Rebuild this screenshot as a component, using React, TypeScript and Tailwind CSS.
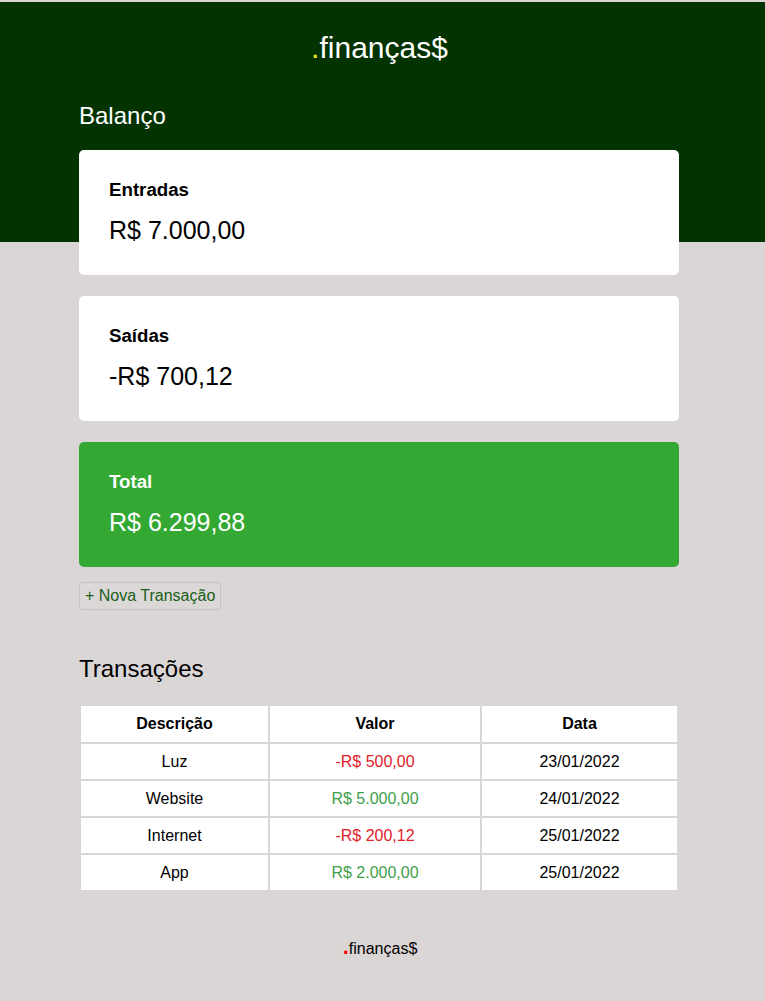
import React from 'react';

interface Transaction {
  description: string;
  amount: string;
  date: string;
  type: 'in' | 'out';
}

const transactions: Transaction[] = [
  { description: 'Luz', amount: '-R$ 500,00', date: '23/01/2022', type: 'out' },
  { description: 'Website', amount: 'R$ 5.000,00', date: '24/01/2022', type: 'in' },
  { description: 'Internet', amount: '-R$ 200,12', date: '25/01/2022', type: 'out' },
  { description: 'App', amount: 'R$ 2.000,00', date: '25/01/2022', type: 'in' },
];

const BalanceCard: React.FC<{ title: string; value: string; total?: boolean }> = ({ title, value, total }) => (
  <div
    className={`h-[125px] rounded-[5px] px-[30px] pt-[29px] ${
      total ? 'bg-[#33a833] text-white' : 'bg-white text-black'
    }`}
  >
    <h3 className="text-[18.7px] leading-[22px] font-bold">{title}</h3>
    <p className="mt-[15px] text-[25px] leading-[29px]">{value}</p>
  </div>
);

const App: React.FC = () => {
  return (
    <div className="min-h-[1001px] bg-[#dad6d6] pt-[2px] font-['Liberation_Sans',Arial,sans-serif] text-black">
      <header className="h-[240px] bg-[#033300]">
        <div className="pt-[29px] pr-[6px] text-center text-[30px] leading-[34px] text-white">
          <span className="text-[#e8ea2c]">.</span>finanças$
        </div>
        <div className="ml-[79px] mt-[37px] w-[600px] text-[24px] leading-[28px] text-white">Balanço</div>
      </header>

      <main className="ml-[79px] -mt-[92px] w-[600px]">
        <section className="flex flex-col gap-[21px]">
          <BalanceCard title="Entradas" value="R$ 7.000,00" />
          <BalanceCard title="Saídas" value="-R$ 700,12" />
          <BalanceCard title="Total" value="R$ 6.299,88" total />
        </section>

        <button className="mt-[15px] h-[28px] rounded-[3px] border border-[#c6c3c3] bg-[#dcd8d8] px-[5px] text-[16px] leading-[18px] text-[#1a5f1a]">
          + Nova Transação
        </button>

        <h2 className="mt-[45px] text-[24px] leading-[28px]">Transações</h2>

        <table className="mt-[21px] w-[600px] border-separate border-spacing-[2px] text-[16px]">
          <thead>
            <tr>
              <th className="h-[36px] w-[187px] bg-white font-bold">Descrição</th>
              <th className="h-[36px] w-[210px] bg-white font-bold">Valor</th>
              <th className="h-[36px] bg-white font-bold">Data</th>
            </tr>
          </thead>
          <tbody>
            {transactions.map((t) => (
              <tr key={t.description}>
                <td className="h-[35px] bg-white text-center">{t.description}</td>
                <td
                  className={`h-[35px] bg-white text-center ${
                    t.type === 'out' ? 'text-[#e0202b]' : 'text-[#3f9e4a]'
                  }`}
                >
                  {t.amount}
                </td>
                <td className="h-[35px] bg-white text-center">{t.date}</td>
              </tr>
            ))}
          </tbody>
        </table>
      </main>

      <footer className="mt-[45px] pr-[5px] text-center text-[16px] leading-[20px]">
        <span className="text-[22px] leading-[20px] font-black text-[#ff0000]">.</span>finanças$
      </footer>
    </div>
  );
};

export default App;
